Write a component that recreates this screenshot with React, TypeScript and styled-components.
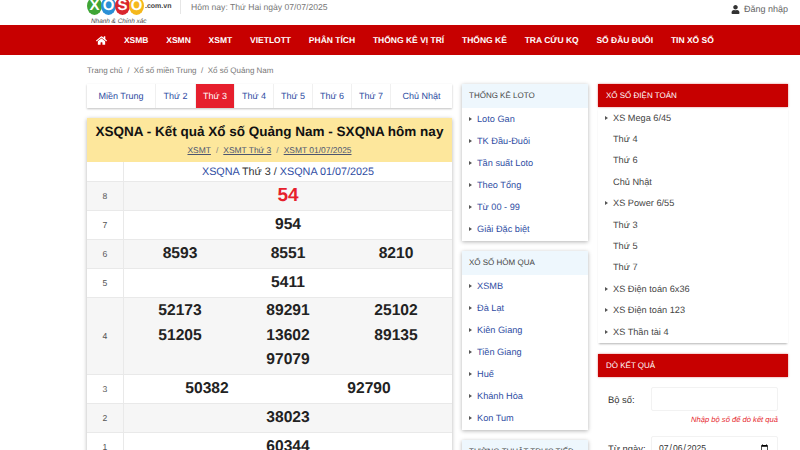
import styled, { createGlobalStyle } from 'styled-components'
import { FaHome, FaUser } from 'react-icons/fa'

const GlobalStyle = createGlobalStyle`
  html, body {
    margin: 0;
    padding: 0;
    background: #fff;
    height: 450px;
    overflow: hidden;
    font-family: "Liberation Sans", Arial, sans-serif;
    color: #333;
    text-rendering: geometricPrecision;
  }
  * { box-sizing: border-box; }
`

const Styled = {
  Top: styled.div`
    height: 25px;
    padding: 0 12px 0 87px;
    display: flex;
    align-items: flex-start;
    overflow: hidden;
  `,
  Logo: styled.div`
    width: 89px;
    height: 25px;
    flex: none;
  `,
  LogoRow: styled.div`
    display: flex;
    align-items: center;
    margin-top: -3px;
    height: 18px;
  `,
  Ball: styled.span<{ $color: string }>`
    width: 15px;
    height: 18px;
    margin-right: -1px;
    border-radius: 50%;
    background: ${({ $color }) => $color};
    color: #fff;
    font-size: 15px;
    font-weight: bold;
    line-height: 18px;
    text-align: center;
  `,
  LogoTail: styled.span`
    margin: 1px 0 0 2px;
    font-size: 7px;
    font-weight: bold;
    color: #444;
  `,
  Slogan: styled.div`
    margin: 3px 0 0 4px;
    font-size: 6.4px;
    line-height: 7px;
    font-style: italic;
    color: #444;
  `,
  Today: styled.div`
    height: 14px;
    margin-left: 4px;
    padding-left: 10px;
    border-left: 1px solid #e6e6e6;
    font-size: 8.6px;
    line-height: 14px;
    color: #777;
  `,
  Login: styled.div`
    margin-left: auto;
    display: flex;
    align-items: center;
    gap: 4px;
    height: 18px;
    font-size: 9px;
    color: #666;

    svg { color: #333; font-size: 9px; }
  `,
  Nav: styled.nav`
    height: 30px;
    padding-left: 87px;
    background: #c70000;
    display: flex;
    align-items: center;
  `,
  NavHome: styled.span`
    width: 28px;
    padding-left: 9px;
    color: #fff;
    font-size: 11px;
    display: flex;
  `,
  NavItem: styled.span`
    padding: 0 8.9px;
    font-size: 8.5px;
    font-weight: bold;
    color: #fff;
    white-space: nowrap;
  `,
  Crumbs: styled.div`
    height: 29px;
    padding: 10px 0 0 87px;
    font-size: 8px;
    line-height: 12px;
    color: #777;
  `,
  Main: styled.div`
    display: flex;
    align-items: flex-start;
    gap: 10px;
    padding-left: 87px;
  `,
  Left: styled.div`
    width: 365px;
    flex: none;
  `,
  Tabs: styled.div`
    height: 24px;
    display: grid;
    grid-template-columns: 69px 40px 39px 39px 39px 39px 39px 61px;
    background: #fff;
    box-shadow: 0 1px 2px rgba(0, 0, 0, 0.25);
    margin-bottom: 10px;
  `,
  Tab: styled.div<{ $active?: boolean }>`
    display: flex;
    align-items: center;
    justify-content: center;
    padding-bottom: 1px;
    font-size: 9px;
    color: ${({ $active }) => ($active ? '#fff' : '#2f4da3')};
    background: ${({ $active }) => ($active ? '#e61f2d' : '#fff')};
    border-right: 1px solid #f0f0f0;
    &:last-child { border-right: 0; }
  `,
  Card: styled.div`
    background: #fff;
    box-shadow: 0 1px 4px rgba(0, 0, 0, 0.3);
  `,
  Head: styled.div`
    height: 44px;
    background: #fde79c;
    text-align: center;
    padding-top: 4px;
  `,
  Title: styled.h1`
    margin: 0;
    font-size: 13.5px;
    line-height: 20px;
    font-weight: bold;
    white-space: nowrap;
    color: #111;
  `,
  Links: styled.div`
    margin-top: 2px;
    font-size: 8.45px;
    line-height: 12px;
    color: #888;
    display: flex;
    justify-content: center;
    gap: 5px;
  `,
  HeadLink: styled.span`
    color: #4c5570;
    text-decoration: underline;
  `,
  Row: styled.div<{ $alt?: boolean; $tall?: boolean }>`
    display: flex;
    min-height: ${({ $tall }) => ($tall ? '77px' : '29px')};
    background: ${({ $alt }) => ($alt ? '#f6f6f6' : '#fff')};
    border-top: 1px solid #e9e9e9;
  `,
  SubRow: styled.div`
    display: flex;
    height: 19px;
    background: #fff;
  `,
  Prize: styled.div`
    width: 37px;
    flex: none;
    border-right: 1px solid #e9e9e9;
    display: flex;
    align-items: center;
    justify-content: center;
    font-size: 8.6px;
    color: #555;
  `,
  SubCell: styled.div`
    flex: 1;
    text-align: center;
    font-size: 10.8px;
    line-height: 20px;
    color: #333;
  `,
  SubLink: styled.span`
    color: #2f4da3;
  `,
  Numbers: styled.div<{ $cols: number }>`
    flex: 1;
    display: grid;
    grid-template-columns: repeat(${({ $cols }) => $cols}, 1fr);
    align-items: center;
    align-content: center;
    justify-items: center;
    padding: 0 2px;
  `,
  Num: styled.div<{ $red?: boolean; $big?: boolean }>`
    font-size: ${({ $big }) => ($big ? '19px' : '15.6px')};
    line-height: 24.6px;
    font-weight: bold;
    color: ${({ $red }) => ($red ? '#e61f2d' : '#222')};
  `,
  Middle: styled.div`
    width: 126px;
    flex: none;
    display: flex;
    flex-direction: column;
    gap: 10px;
  `,
  Box: styled.div`
    background: #fff;
    box-shadow: 0 1px 4px rgba(0, 0, 0, 0.3);
    padding-bottom: 1px;
  `,
  BoxHead: styled.div`
    height: 24px;
    padding-left: 7px;
    background: #eef7fd;
    font-size: 8px;
    line-height: 24px;
    color: #444;
  `,
  BoxItem: styled.div`
    height: 22px;
    display: flex;
    align-items: center;
    gap: 5px;
    padding-left: 7px;
    font-size: 9.2px;
    color: #2f4da3;
  `,
  Arrow: styled.span`
    width: 0;
    height: 0;
    flex: none;
    border-left: 3px solid #555;
    border-top: 2px solid transparent;
    border-bottom: 2px solid transparent;
  `,
  Right: styled.div`
    width: 190px;
    flex: none;
  `,
  RedHead: styled.div`
    height: 23px;
    padding-left: 8px;
    background: #c70000;
    box-shadow: 0 0 2px rgba(200, 0, 0, 0.5);
    font-size: 8px;
    line-height: 23px;
    color: #fff;
  `,
  Menu: styled.div`
    padding: 0 0 1px;
    box-shadow: 0 2px 2px -1px rgba(0, 0, 0, 0.3);
    margin-bottom: 11px;
  `,
  MenuItem: styled.div<{ $child?: boolean }>`
    height: 21.4px;
    display: flex;
    align-items: center;
    gap: 5px;
    padding-left: ${({ $child }) => ($child ? '15px' : '7px')};
    font-size: 9.2px;
    color: #444;
  `,
  Form: styled.div`
    padding: 10px 10px 0 10px;
  `,
  Field: styled.div`
    display: flex;
    align-items: center;
    height: 24px;
  `,
  Label: styled.label`
    width: 43px;
    flex: none;
    font-size: 9.4px;
    color: #333;
  `,
  Input: styled.input`
    width: 127px;
    height: 24px;
    padding: 0 6px;
    border: 1px solid #f2f2f2;
    border-radius: 2px;
    background: #fff;
    font-family: "Liberation Sans", Arial, sans-serif;
    font-size: 8.6px;
    color: #333;
    outline: none;
  `,
  Hint: styled.div`
    margin: 3px 0 10px;
    height: 12px;
    text-align: right;
    font-size: 7.6px;
    line-height: 12px;
    font-style: italic;
    color: #e61f2d;
  `,
}

const navItems = ['XSMB', 'XSMN', 'XSMT', 'VIETLOTT', 'PHÂN TÍCH', 'THỐNG KÊ VỊ TRÍ', 'THỐNG KÊ', 'TRA CỨU KQ', 'SỐ ĐẦU ĐUÔI', 'TIN XỔ SỐ']
const tabs = ['Miền Trung', 'Thứ 2', 'Thứ 3', 'Thứ 4', 'Thứ 5', 'Thứ 6', 'Thứ 7', 'Chủ Nhật']
const prizes = [
  { name: '8', cols: 1, nums: ['54'], red: true },
  { name: '7', cols: 1, nums: ['954'] },
  { name: '6', cols: 3, nums: ['8593', '8551', '8210'] },
  { name: '5', cols: 1, nums: ['5411'] },
  { name: '4', cols: 3, nums: ['52173', '89291', '25102', '51205', '13602', '89135', '', '97079', ''] },
  { name: '3', cols: 2, nums: ['50382', '92790'] },
  { name: '2', cols: 1, nums: ['38023'] },
  { name: '1', cols: 1, nums: ['60344'] },
]
const boxes = [
  { title: 'THỐNG KÊ LOTO', items: ['Loto Gan', 'TK Đầu-Đuôi', 'Tần suất Loto', 'Theo Tổng', 'Từ 00 - 99', 'Giải Đặc biệt'] },
  { title: 'XỔ SỐ HÔM QUA', items: ['XSMB', 'Đà Lạt', 'Kiên Giang', 'Tiền Giang', 'Huế', 'Khánh Hòa', 'Kon Tum'] },
  { title: 'TƯỜNG THUẬT TRỰC TIẾP', items: [] },
]
const menu = [
  { label: 'XS Mega 6/45' },
  { label: 'Thứ 4', child: true },
  { label: 'Thứ 6', child: true },
  { label: 'Chủ Nhật', child: true },
  { label: 'XS Power 6/55' },
  { label: 'Thứ 3', child: true },
  { label: 'Thứ 5', child: true },
  { label: 'Thứ 7', child: true },
  { label: 'XS Điện toán 6x36' },
  { label: 'XS Điện toán 123' },
  { label: 'XS Thần tài 4' },
]

const App = () => {
  return (
    <>
      <GlobalStyle />
      <Styled.Top>
        <Styled.Logo>
          <Styled.LogoRow>
            <Styled.Ball $color="#3fa535">X</Styled.Ball>
            <Styled.Ball $color="#2a8fd6">O</Styled.Ball>
            <Styled.Ball $color="#d9262e">S</Styled.Ball>
            <Styled.Ball $color="#f5b81c">O</Styled.Ball>
            <Styled.LogoTail>.com.vn</Styled.LogoTail>
          </Styled.LogoRow>
          <Styled.Slogan>Nhanh &amp; Chính xác</Styled.Slogan>
        </Styled.Logo>
        <Styled.Today>Hôm nay: Thứ Hai ngày 07/07/2025</Styled.Today>
        <Styled.Login>
          <FaUser />
          Đăng nhập
        </Styled.Login>
      </Styled.Top>
      <Styled.Nav>
        <Styled.NavHome>
          <FaHome />
        </Styled.NavHome>
        {navItems.map((item) => (
          <Styled.NavItem key={item}>{item}</Styled.NavItem>
        ))}
      </Styled.Nav>
      <Styled.Crumbs>Trang chủ &nbsp;/&nbsp; Xổ số miền Trung &nbsp;/&nbsp; Xổ số Quảng Nam</Styled.Crumbs>
      <Styled.Main>
        <Styled.Left>
          <Styled.Tabs>
            {tabs.map((tab) => (
              <Styled.Tab key={tab} $active={tab === 'Thứ 3'}>
                {tab}
              </Styled.Tab>
            ))}
          </Styled.Tabs>
          <Styled.Card>
            <Styled.Head>
              <Styled.Title>XSQNA - Kết quả Xổ số Quảng Nam - SXQNA hôm nay</Styled.Title>
              <Styled.Links>
                <Styled.HeadLink>XSMT</Styled.HeadLink>/
                <Styled.HeadLink>XSMT Thứ 3</Styled.HeadLink>/
                <Styled.HeadLink>XSMT 01/07/2025</Styled.HeadLink>
              </Styled.Links>
            </Styled.Head>
            <Styled.SubRow>
              <Styled.Prize />
              <Styled.SubCell>
                <Styled.SubLink>XSQNA</Styled.SubLink> Thứ 3 / <Styled.SubLink>XSQNA 01/07/2025</Styled.SubLink>
              </Styled.SubCell>
            </Styled.SubRow>
            {prizes.map((prize, index) => (
              <Styled.Row key={prize.name} $alt={index % 2 === 0} $tall={prize.name === '4'}>
                <Styled.Prize>{prize.name}</Styled.Prize>
                <Styled.Numbers $cols={prize.cols}>
                  {prize.nums.map((num, i) => (
                    <Styled.Num key={i} $red={prize.red} $big={prize.red}>
                      {num}
                    </Styled.Num>
                  ))}
                </Styled.Numbers>
              </Styled.Row>
            ))}
          </Styled.Card>
        </Styled.Left>
        <Styled.Middle>
          {boxes.map((box) => (
            <Styled.Box key={box.title}>
              <Styled.BoxHead>{box.title}</Styled.BoxHead>
              {box.items.map((item) => (
                <Styled.BoxItem key={item}>
                  <Styled.Arrow />
                  {item}
                </Styled.BoxItem>
              ))}
            </Styled.Box>
          ))}
        </Styled.Middle>
        <Styled.Right>
          <Styled.RedHead>XỔ SỐ ĐIỆN TOÁN</Styled.RedHead>
          <Styled.Menu>
            {menu.map((item, i) => (
              <Styled.MenuItem key={i} $child={item.child}>
                {!item.child && <Styled.Arrow />}
                {item.label}
              </Styled.MenuItem>
            ))}
          </Styled.Menu>
          <Styled.RedHead>DÒ KẾT QUẢ</Styled.RedHead>
          <Styled.Form>
            <Styled.Field>
              <Styled.Label>Bộ số:</Styled.Label>
              <Styled.Input type="text" />
            </Styled.Field>
            <Styled.Hint>Nhập bộ số để dò kết quả</Styled.Hint>
            <Styled.Field>
              <Styled.Label>Từ ngày:</Styled.Label>
              <Styled.Input type="date" defaultValue="2025-07-06" />
            </Styled.Field>
          </Styled.Form>
        </Styled.Right>
      </Styled.Main>
    </>
  )
}

export default App
